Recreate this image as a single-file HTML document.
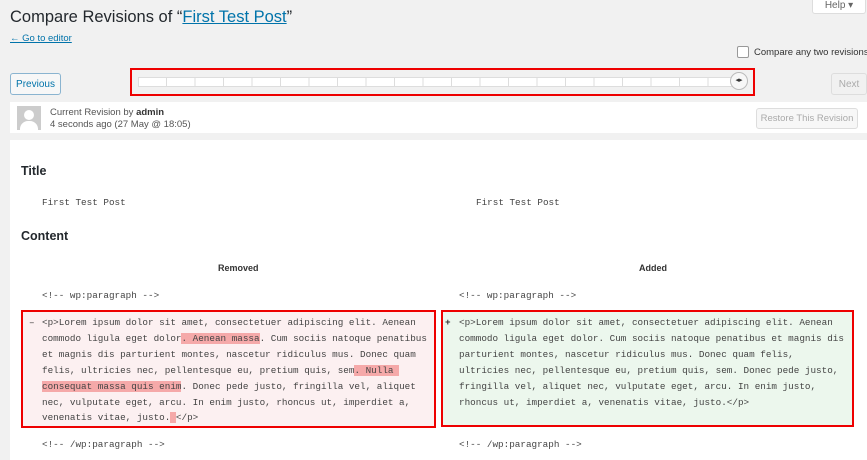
<!DOCTYPE html>
<html><head><meta charset="utf-8"><style>
*{margin:0;padding:0;box-sizing:border-box}
body{width:867px;height:456px;background:#f1f1f1;font-family:"Liberation Sans",sans-serif;position:relative;overflow:hidden;color:#23282d}
.a{position:absolute}
.mono{font-family:"Liberation Mono",monospace;font-size:9.3px;color:#444;white-space:pre;line-height:15.9px}
.btn{position:absolute;border:1px solid #ccc;border-radius:3px;font-size:10px;text-align:center;white-space:nowrap}
.hl{background:#f5a9a9}
</style></head><body>
<div class="a" style="left:10px;top:8px;font-size:16.5px;color:#23282d;white-space:nowrap">Compare Revisions of “<span style="color:#0073aa;text-decoration:underline">First Test Post</span>”</div>
<div class="a" style="left:10px;top:33px;font-size:9.5px;color:#0073aa;text-decoration:underline">← Go to editor</div>
<div class="btn" style="left:812px;top:-6px;width:54px;height:20px;background:#fff;border-color:#ddd;color:#666;line-height:22px">Help ▾</div>
<div class="a" style="left:737px;top:46px;width:12px;height:12px;border:1px solid #999;border-radius:2px;background:#fff"></div>
<div class="a" style="left:754px;top:47px;font-size:9.5px;color:#333;white-space:nowrap">Compare any two revisions</div>
<div class="btn" style="left:10px;top:73px;width:51px;height:22px;border-color:#8ab4d0;color:#0073aa;background:#f7f7f7;line-height:21px">Previous</div>
<div class="btn" style="left:831px;top:73px;width:36px;height:22px;border-color:#ddd;color:#aaa;line-height:21px">Next</div>
<div class="a" style="left:138px;top:77px;width:600px;height:10px;background:#fff;border:1px solid #ddd"></div>
<div class="a" style="left:166px;top:78px;width:1px;height:8px;background:#ddd;box-shadow:28.5px 0 #ddd,57px 0 #ddd,85.5px 0 #ddd,114px 0 #ddd,142.5px 0 #ddd,171px 0 #ddd,199.5px 0 #ddd,228px 0 #ddd,256.5px 0 #ddd,285px 0 #ddd,313.5px 0 #ddd,342px 0 #ddd,370.5px 0 #ddd,399px 0 #ddd,427.5px 0 #ddd,456px 0 #ddd,484.5px 0 #ddd,513px 0 #ddd,541.5px 0 #ddd"></div>
<div class="a" style="left:730px;top:72px;width:18px;height:18px;border:1px solid #bbb;border-radius:50%;background:#f7f7f7;font-size:7px;text-align:center;line-height:16px;color:#333">◂▸</div>
<div class="a" style="left:130px;top:68px;width:625px;height:28px;border:2px solid #e00"></div>
<div class="a" style="left:10px;top:102px;width:857px;height:31px;background:#fff"></div>
<div class="a" style="left:17px;top:106px;width:24px;height:24px;background:#ccc;overflow:hidden"><div class="a" style="left:7px;top:4px;width:10px;height:10px;border-radius:50%;background:#fff"></div><div class="a" style="left:3px;top:15px;width:18px;height:14px;border-radius:8px 8px 0 0;background:#fff"></div></div>
<div class="a" style="left:50px;top:107px;font-size:9.5px;color:#555">Current Revision by <b style="color:#333">admin</b></div>
<div class="a" style="left:50px;top:119px;font-size:9.5px;color:#555">4 seconds ago (27 May @ 18:05)</div>
<div class="btn" style="left:756px;top:108px;width:102px;height:21px;border-color:#ddd;color:#aaa;background:#f7f7f7;line-height:20px;font-size:9.5px">Restore This Revision</div>
<div class="a" style="left:10px;top:140px;width:857px;height:320px;background:#fff"></div>
<div class="a" style="left:21px;top:164px;font-size:12.5px;font-weight:bold">Title</div>
<div class="a mono" style="left:42px;top:195px">First Test Post</div>
<div class="a mono" style="left:476px;top:195px">First Test Post</div>
<div class="a" style="left:21px;top:229px;font-size:12.5px;font-weight:bold">Content</div>
<div class="a" style="left:218px;top:263px;font-size:9px;font-weight:bold;color:#333">Removed</div>
<div class="a" style="left:639px;top:263px;font-size:9px;font-weight:bold;color:#333">Added</div>
<div class="a mono" style="left:42px;top:288px">&lt;!-- wp:paragraph --&gt;</div>
<div class="a mono" style="left:459px;top:288px">&lt;!-- wp:paragraph --&gt;</div>
<div class="a" style="left:22px;top:311px;width:413px;height:116px;background:#fcf0f1"></div>
<div class="a" style="left:442px;top:311px;width:411px;height:116px;background:#ecf7ed"></div>
<div class="a mono" style="left:29px;top:315px;color:#333">–</div>
<div class="a mono" style="left:42px;top:315px">&lt;p&gt;Lorem ipsum dolor sit amet, consectetuer adipiscing elit. Aenean
commodo ligula eget dolor<span class="hl">. Aenean massa</span>. Cum sociis natoque penatibus
et magnis dis parturient montes, nascetur ridiculus mus. Donec quam
felis, ultricies nec, pellentesque eu, pretium quis, sem<span class="hl">. Nulla </span>
<span class="hl">consequat massa quis enim</span>. Donec pede justo, fringilla vel, aliquet
nec, vulputate eget, arcu. In enim justo, rhoncus ut, imperdiet a,
venenatis vitae, justo.<span class="hl"> </span>&lt;/p&gt;</div>
<div class="a mono" style="left:445px;top:315px;color:#333;font-weight:bold">+</div>
<div class="a mono" style="left:459px;top:315px">&lt;p&gt;Lorem ipsum dolor sit amet, consectetuer adipiscing elit. Aenean
commodo ligula eget dolor. Cum sociis natoque penatibus et magnis dis
parturient montes, nascetur ridiculus mus. Donec quam felis,
ultricies nec, pellentesque eu, pretium quis, sem. Donec pede justo,
fringilla vel, aliquet nec, vulputate eget, arcu. In enim justo,
rhoncus ut, imperdiet a, venenatis vitae, justo.&lt;/p&gt;</div>
<div class="a" style="left:21px;top:310px;width:415px;height:118px;border:2px solid #e00"></div>
<div class="a" style="left:441px;top:310px;width:413px;height:117px;border:2px solid #e00"></div>
<div class="a mono" style="left:42px;top:437px">&lt;!-- /wp:paragraph --&gt;</div>
<div class="a mono" style="left:459px;top:437px">&lt;!-- /wp:paragraph --&gt;</div>
</body></html>
